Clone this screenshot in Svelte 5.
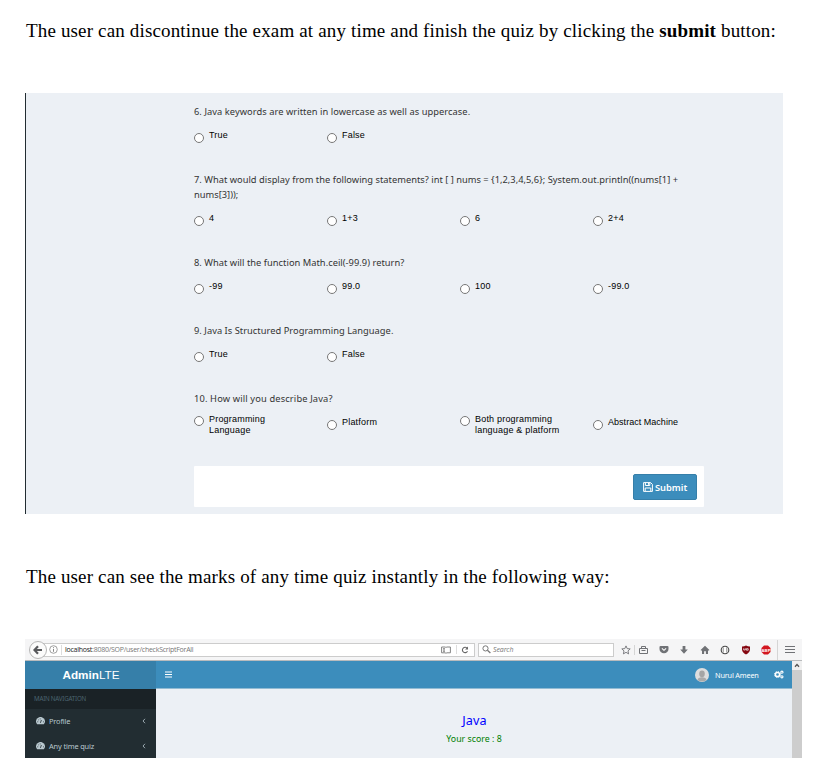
<script>
  const questions = [
    { lines: ['6. Java keywords are written in lowercase as well as uppercase.'], spacing: 0.055, options: [['True'], ['False']] },
    { lines: ['7. What would display from the following statements? int [ ] nums = {1,2,3,4,5,6}; System.out.println((nums[1] +', 'nums[3]));'], spacing: 0.015, options: [['4'], ['1+3'], ['6'], ['2+4']] },
    { lines: ['8. What will the function Math.ceil(-99.9) return?'], spacing: 0.03, options: [['-99'], ['99.0'], ['100'], ['-99.0']] },
    { lines: ['9. Java Is Structured Programming Language.'], spacing: 0.03, options: [['True'], ['False']] },
    { lines: ['10. How will you describe Java?'], spacing: 0.14, options: [['Programming', 'Language'], ['Platform'], ['Both programming', 'language & platform'], ['Abstract Machine']] }
  ];
  const menu = ['Profile', 'Any time quiz'];
</script>

<main>
  <p class="intro first"><span>The user can discontinue the exam at any time and finish the quiz by clicking the <b>submit</b> button:</span></p>

  <section class="exam">
    {#each questions as q}
      <div class="question">
        {#each q.lines as line}<div class="title"><span style="letter-spacing: {q.spacing}px">{line}</span></div>{/each}
        <div class="options">
          {#each q.options as opt}
            <label class="option" class:double={opt.length > 1}>
              <i class="radio"></i>
              <span class="label" class:tight={opt[0].startsWith('Abstract')}>{#each opt as part}<span>{part}</span>{/each}</span>
            </label>
          {/each}
        </div>
      </div>
    {/each}
    <div class="footer">
      <button>
        <svg width="10" height="10" viewBox="0 0 10 10" fill="none" stroke="#fff" stroke-width="1"><path d="M.6 .6H7.6L9.4 2.4V9.4H.6ZM2.4 .6V3.5H6.8V.6M2.2 9.2V6H7.8V9.2M5.5 1V2.8" /></svg>
        <span>Submit</span>
      </button>
    </div>
  </section>

  <p class="intro second"><span>The user can see the marks of any time quiz instantly in the following way:</span></p>

  <section class="browser">
    <div class="toolbar">
      <div class="back"><svg width="10" height="10" viewBox="0 0 10 10"><path d="M5 1.2 1.4 5 5 8.8M1.6 5H9" fill="none" stroke="#58595c" stroke-width="2.2" /></svg></div>
      <div class="address">
        <svg class="info" width="9" height="9" viewBox="0 0 9 9" fill="none" stroke="#888"><circle cx="4.5" cy="4.5" r="3.8" stroke-width=".8" /><path d="M4.5 3.8V6.8M4.5 2.2V3" /></svg>
        <span class="url"><b>localhost</b>:8080/SOP/user/checkScriptForAll</span>
        <svg class="reader" width="10" height="8" viewBox="0 0 10 8" fill="none" stroke="#777" stroke-width=".9"><path d="M.6 1H4.2L5 1.6 5.8 1H9.4V6.8H5.8L5 7.4 4.2 6.8H.6ZM2 2.7H4M2 4H4M2 5.3H4" /></svg>
        <i class="split"></i>
        <svg class="reload" width="8" height="8" viewBox="0 0 8 8"><path d="M6.3 2.4A2.7 2.7 0 1 0 6.5 5.2" fill="none" stroke="#666" stroke-width="1.1" /><path d="M7 .6V3.5H4.1Z" fill="#666" /></svg>
      </div>
      <div class="search">
        <svg width="9" height="9" viewBox="0 0 9 9" fill="none" stroke="#777"><circle cx="3.5" cy="3.4" r="2.6" /><path d="M5.4 5.3 8.4 8" stroke-width="1.3" /></svg>
        <span>Search</span>
      </div>
      <div class="tools">
        <svg width="10" height="10" viewBox="0 0 10 10"><path d="M5 .9 6.2 3.6 9.2 3.9 7 5.9 7.6 8.9 5 7.3 2.4 8.9 3 5.9 .8 3.9 3.8 3.6Z" fill="none" stroke="#707276" stroke-width=".9" /></svg>
        <i class="bar"></i>
        <svg class="clip" width="9" height="10" viewBox="0 0 9 10" fill="none" stroke="#707276"><path d="M.5 3.5H8.5V8.5H.5ZM2.5 3.5V1.5H6.5V3.5" /><path d="M2.5 5.5H6.5" /></svg>
        <svg class="pocket" width="10" height="9" viewBox="0 0 10 9"><path d="M1.5 1H8.5Q9.5 1 9.5 2V4A4.5 4.3 0 0 1 .5 4V2Q.5 1 1.5 1Z" fill="#707276" /><path d="M2.9 3.3 5 5.3 7.1 3.3" fill="none" stroke="#fff" stroke-width="1.1" /></svg>
        <svg class="down" width="10" height="10" viewBox="0 0 10 10"><path d="M3.6 1H6.4V4.6H8.8L5 8.8 1.2 4.6H3.6Z" fill="#707276" /></svg>
        <svg class="home" width="10" height="10" viewBox="0 0 10 10"><path d="M5 .8 9.4 5.1 8.7 5.8 8 5.2V9H5.9V6.3H4.1V9H2V5.2L1.3 5.8 .6 5.1Z" fill="#707276" /></svg>
        <svg class="opera" width="10" height="10" viewBox="0 0 10 10"><circle cx="5" cy="5" r="3.8" fill="#fff" stroke="#444" stroke-width="1.1" /><path d="M3.2 2.3V7.7M6.8 2.3V7.7" stroke="#555" stroke-width=".7" /></svg>
        <svg class="shield" width="10" height="10" viewBox="0 0 10 10"><path d="M5 .5Q7 1.5 9 1.4V4.5Q8.8 7.5 5 9.5 1.2 7.5 1 4.5V1.4Q3 1.5 5 .5Z" fill="#850812" /><path d="M2.7 3.3V5H4.3V3.3M5.4 3.7H7.2V5.2H5.4Z" fill="none" stroke="#fff" stroke-width=".7" /></svg>
        <svg class="abp" width="10" height="10" viewBox="0 0 10 10"><path d="M3 .5H7L9.5 3V7L7 9.5H3L.5 7V3Z" fill="#d31720" /><text x="5" y="6.5" text-anchor="middle" font-size="4.2" font-weight="bold" fill="#fff" font-family="Liberation Sans, sans-serif">ABP</text></svg>
        <i class="bar tall"></i>
        <svg class="burger" width="10" height="9" viewBox="0 0 10 9"><path d="M0 1.5H10M0 4.5H10M0 7.5H10" stroke="#707276" stroke-width="1.2" /></svg>
      </div>
    </div>
    <div class="viewport">
      <div class="app">
        <header>
          <div class="brand"><span><b>Admin</b>LTE</span></div>
          <svg class="toggle" width="7" height="7" viewBox="0 0 7 7"><path d="M0 1H7M0 3.5H7M0 6H7" stroke="#fff" stroke-width="1.05" /></svg>
          <svg class="avatar" width="14" height="14" viewBox="0 0 14 14"><circle cx="7" cy="7" r="7" fill="#dedede" /><ellipse cx="7" cy="5.8" rx="2.8" ry="3.4" fill="#a5a5a5" /><path d="M2.5 11.9Q3 9.5 7 9.3 11 9.5 11.5 11.9 9.7 13.5 7 13.5T2.5 11.9Z" fill="#aaa" /></svg>
          <span class="user">Nurul Ameen</span>
          <svg class="gears" width="10" height="9" viewBox="0 0 10 9" fill="none" stroke="#fff"><circle cx="3.5" cy="4.5" r="2.1" stroke-width="1.5" /><circle cx="3.5" cy="4.5" r="3" stroke-width="1" stroke-dasharray="1.2 1.156" /><circle cx="7.9" cy="2.2" r="1.1" stroke-width="1.1" /><circle cx="7.9" cy="6.8" r="1.1" stroke-width="1.1" /></svg>
        </header>
        <div class="body">
          <nav>
            <div class="heading"><span>MAIN NAVIGATION</span></div>
            {#each menu as item}
              <div class="item">
                <svg width="9" height="8" viewBox="0 0 9 8"><path d="M1.2 7.2A4.3 4.3 0 1 1 7.8 7.2Z" fill="#b8c7ce" /><path d="M4.4 5.9 5.4 3M1.3 4.8H2.2M2.2 2.6 2.8 3.2M4.2 1.5V2.3M7 4.8H7.8" stroke="#222d32" stroke-width=".8" /></svg>
                <span>{item}</span>
                <svg class="angle" width="4" height="6" viewBox="0 0 4 6"><path d="M3 .8 1 3 3 5.2" fill="none" stroke="#b8c7ce" stroke-width=".8" /></svg>
              </div>
            {/each}
          </nav>
          <div class="result">
            <div class="subject"><span>Java</span></div>
            <div class="score"><span>Your score : 8</span></div>
          </div>
        </div>
      </div>
      <div class="scroll"><svg width="10" height="9" viewBox="0 0 10 9"><path d="M3 5.7 5 3.5 7 5.7" fill="none" stroke="#555" stroke-width="1.3" /></svg><div></div></div>
    </div>
  </section>
</main>

<style>
  :global(body) { margin: 0; background: #fff; }
  * { box-sizing: border-box; }
  svg { display: block; flex: none; }
  main { width: 830px; height: 782px; padding-left: 25px; overflow: hidden; display: flex; flex-direction: column; }
  .intro { margin: 0; height: 24px; line-height: 24px; font-family: "Liberation Serif", serif; font-size: 19px; color: #000; white-space: nowrap; letter-spacing: .155px; padding-left: 1px; flex: none; }
  .first { margin-top: 19px; }
  .second { margin-top: 51px; }
  .exam { margin-top: 50px; width: 758px; height: 421px; flex: none; background: #ecf0f5; border-left: 1px solid #222d32; padding: 11px 0 0 168px; }
  .question { padding-bottom: 23px; }
  .title { height: 15px; line-height: 15px; font-family: "Noto Sans", sans-serif; font-size: 9.3px; color: #333; white-space: nowrap; }
  .options { display: grid; grid-template-columns: repeat(4, 133px); height: 30px; padding-top: 11px; }
  .option { display: flex; align-items: flex-start; }
  .radio { width: 10px; height: 10px; margin-top: 3px; border: 1px solid #777; border-radius: 50%; background: #fff; flex: none; }
  .double { margin-top: -3px; }
  .double .radio { margin-top: 2px; }
  .label { display: flex; flex-direction: column; align-items: flex-start; margin-left: 5px; font: 9px/11px "Liberation Sans", sans-serif; letter-spacing: .2px; color: #000; white-space: nowrap; }
  .tight { letter-spacing: .03px; }
  .footer { margin-top: 7px; width: 510px; height: 41px; background: #fff; border-radius: 1px; display: flex; justify-content: flex-end; align-items: center; padding-right: 7px; }
  button { width: 64px; height: 26px; border: 1px solid #367fa9; border-radius: 2px; background: #3c8dbc; color: #fff; display: flex; align-items: center; gap: 2px; padding: 1px 0 0 9px; font: 600 9.3px "Noto Sans", sans-serif; }
  .browser { width: 777px; height: 119px; margin-top: 50px; flex: none; display: flex; flex-direction: column; overflow: hidden; }
  .toolbar { height: 22px; flex: none; background: #f5f5f6; border-bottom: 1px solid #b9bbbd; display: flex; align-items: center; padding-left: 4px; }
  .back { width: 18px; height: 18px; border: 1px solid #b5b5b5; border-radius: 50%; background: #fbfbfb; display: flex; align-items: center; justify-content: center; z-index: 1; flex: none; }
  .address { width: 432px; height: 14px; margin-left: -4px; border: 1px solid #ccc; background: #fff; display: flex; align-items: center; }
  .info { margin-left: 5px; }
  .url { margin-left: 3px; border-left: 1px solid #ddd; padding-left: 3px; font: 7px/10px "Open Sans", sans-serif; letter-spacing: -.25px; color: #777; white-space: nowrap; width: 138px; }
  .url b { font-weight: 400; color: #222; }
  .reader { margin-left: auto; }
  .split { width: 1px; height: 9px; background: #ddd; margin-left: 5px; }
  .reload { margin-left: 4px; margin-right: 5px; }
  .search { width: 136px; height: 14px; margin-left: 3px; border: 1px solid #ccc; background: #fff; display: flex; align-items: center; padding-left: 3px; gap: 2px; font: italic 7px "Open Sans", sans-serif; letter-spacing: -.1px; color: #777; }
  .tools { display: flex; align-items: center; margin-left: 7px; }
  .bar { width: 1px; height: 10px; background: #d5d5d5; margin-left: 3px; }
  .clip { margin-left: 4px; }
  .pocket, .down, .home, .opera, .shield, .abp { margin-left: 10.5px; }
  .tall { height: 20px; margin-left: 6px; }
  .burger { margin-left: 7px; }
  .viewport { display: flex; height: 97px; }
  .app { width: 767px; }
  header { height: 28px; background: #3c8dbc; border-bottom: 1px solid #92bbd3; display: flex; align-items: center; color: #fff; font-family: "Noto Sans", sans-serif; }
  .brand { width: 131px; height: 28px; background: #367fa9; text-align: center; font: 11.7px/27px "Liberation Sans", sans-serif; padding-left: 1px; }
  .toggle { margin-left: 9px; }
  .avatar { margin-left: 523px; }
  .user { width: 60px; margin-left: 5px; padding-left: 1px; font-size: 7.3px; letter-spacing: -.17px; white-space: nowrap; }
  .body { display: flex; height: 69px; background: #ecf0f5; font-family: "Noto Sans", sans-serif; }
  nav { width: 131px; background: #222d32; }
  .heading { height: 20px; line-height: 20px; padding-left: 9px; background: #1a2226; color: #4b646f; font-size: 6.2px; letter-spacing: -.22px; }
  .item { height: 24.5px; display: flex; align-items: center; padding-left: 11px; color: #b8c7ce; font-size: 7.4px; letter-spacing: -.15px; gap: 4px; white-space: nowrap; }
  .angle { margin-left: auto; margin-right: 10px; }
  .result { width: 636px; text-align: center; padding-top: 23px; }
  .subject { color: #00f; font-size: 12.6px; letter-spacing: .1px; line-height: 18px; padding-left: 1px; }
  .score { color: green; font-size: 8.8px; line-height: 19px; }
  .scroll { width: 10px; background: #f0f0f0; }
  .scroll div { height: 88px; background: #cdcdcd; }
</style>
